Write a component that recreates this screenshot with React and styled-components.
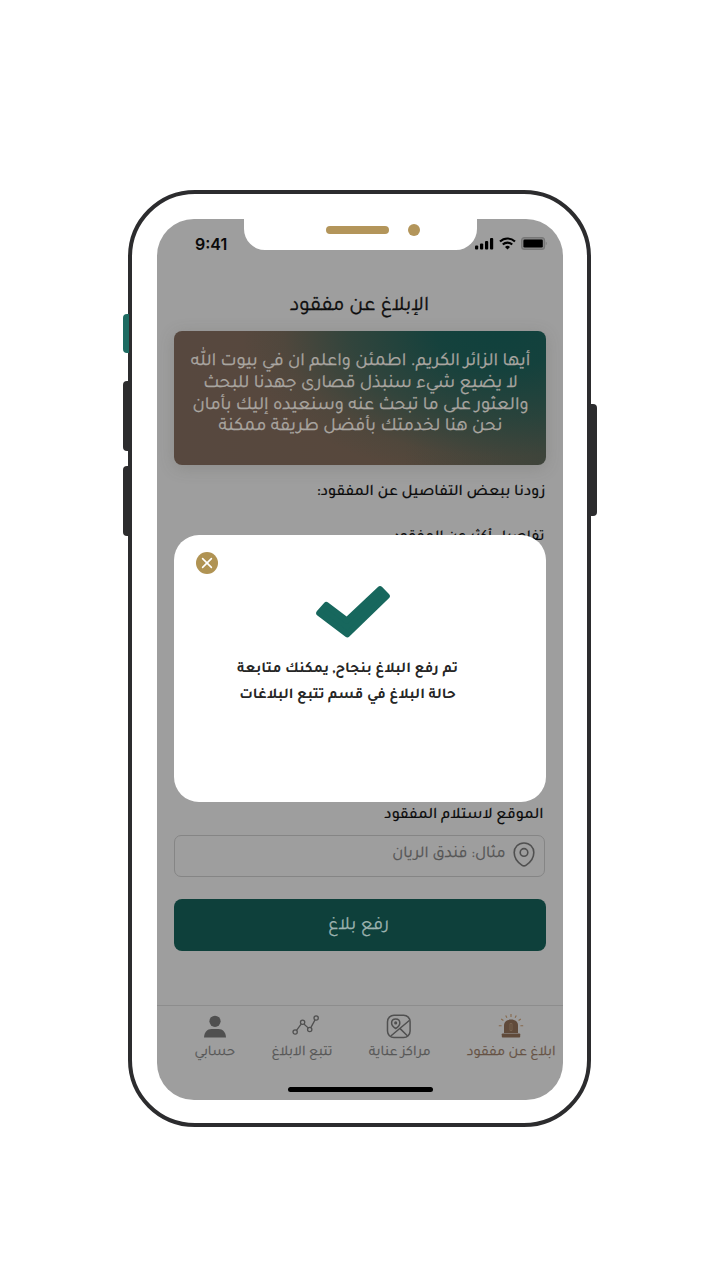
import React from "react";
import styled, { createGlobalStyle } from "styled-components";

const Global = createGlobalStyle`
  * { box-sizing: border-box; }
  body { margin: 0; background: #fff; font-family: Tajawal, "Noto Sans Arabic", "DejaVu Sans", sans-serif; }
`;

const Page = styled.main`
  display: flex;
  justify-content: center;
  height: 1280px;
  padding: 190px 1px 0 0;
  overflow: hidden;
`;

const Phone = styled.div`
  position: relative;
  width: 463px;
  height: 937px;
  padding: 24.5px 24px 0 24.5px;
  border: 4.5px solid #2c2c2e;
  border-radius: 67px;
  background: #fff;
`;

const SideButton = styled.i`
  position: absolute;
  ${(p) => (p.$side === "left" ? "left: -9.5px" : "right: -9.5px")};
  top: ${(p) => p.$top}px;
  width: 6px;
  height: ${(p) => p.$height}px;
  border-radius: ${(p) => (p.$side === "left" ? "4px 0 0 4px" : "0 4px 4px 0")};
  background: ${(p) => p.$color || "#2c2c2e"};
`;

const Screen = styled.div`
  position: relative;
  display: flex;
  flex-direction: column;
  width: 406px;
  height: 881.5px;
  border-radius: 37px;
  background: #9e9e9e;
  overflow: hidden;
`;

const Notch = styled.div`
  position: absolute;
  top: -1px;
  left: 87px;
  width: 233px;
  height: 32.5px;
  border-radius: 0 0 21px 21px;
  background: #fff;
`;

const Speaker = styled.i`
  position: absolute;
  top: 8px;
  left: 82px;
  width: 63px;
  height: 8px;
  border-radius: 4px;
  background: #b3955a;
`;

const Camera = styled.i`
  position: absolute;
  top: 6px;
  left: 164px;
  width: 12px;
  height: 12px;
  border-radius: 50%;
  background: #b3955a;
`;

const StatusBar = styled.header`
  display: flex;
  flex: none;
  align-items: center;
  justify-content: space-between;
  height: 50px;
  padding: 0 16px 0 38.5px;
`;

const Clock = styled.time`
  color: #0a0a0a;
  font: 600 16px Inter, sans-serif;
`;

const StatusIcons = styled.div`
  display: flex;
  align-items: center;
  gap: 5px;
`;

const Title = styled.h1`
  flex: none;
  height: 62.5px;
  margin: 0;
  padding-top: 7px;
  text-align: center;
  color: #0c0c0c;
  font-size: 20.6px;
  font-weight: 400;
  line-height: 62.5px;
  -webkit-text-stroke: 0.35px;
`;

const Banner = styled.section`
  flex: none;
  height: 134px;
  margin: 0 17px;
  padding: 20px 0 0 2px;
  border-radius: 8px;
  background:
    radial-gradient(ellipse 260px 150px at 88% 0%, #10413d 0%, rgba(16, 65, 61, 0.92) 25%, rgba(24, 66, 60, 0.6) 58%, rgba(50, 68, 58, 0.2) 84%, rgba(87, 72, 62, 0) 100%),
    linear-gradient(90deg, #57483f 0%, #57483c 62%, #46453b 90%, #40443b 100%);
  box-shadow: 0 3px 16px rgba(80, 80, 72, 0.22);
`;

const BannerLine = styled.p`
  margin: 0;
  height: 21.8px;
  text-align: center;
  white-space: nowrap;
  color: #aaa6a1;
  font-size: 18.4px;
  line-height: 23px;
  -webkit-text-stroke: 0.3px;
`;

const Label = styled.p`
  flex: none;
  height: 24px;
  margin: ${(p) => p.$top}px ${(p) => p.$right}px 0 0;
  color: #0c0c0c;
  font-size: ${(p) => p.$size || 15.9}px;
  font-weight: 500;
  line-height: 24px;
  -webkit-text-stroke: 0.15px;
`;

const Field = styled.div`
  display: flex;
  flex: none;
  justify-content: flex-start;
  gap: 7px;
  height: 42.5px;
  margin: 6.5px 18px 0 17px;
  padding: 6px 9px;
  border: 1.5px solid #858585;
  border-radius: 7px;
  color: #555;
  font-size: 16.4px;
  line-height: 25px;
  -webkit-text-stroke: 0.25px;
`;

const Submit = styled.button`
  flex: none;
  height: 52px;
  margin: 21.5px 17px 0;
  padding: 3px 2px 0 0;
  border: 0;
  border-radius: 8px;
  background: #0e403b;
  color: #9db3b0;
  font: 400 18.8px Tajawal, "Noto Sans Arabic", "DejaVu Sans", sans-serif;
  -webkit-text-stroke: 0.25px;
`;

const Nav = styled.nav`
  display: flex;
  flex: none;
  direction: ltr;
  gap: 36.3px;
  height: 95px;
  margin-top: auto;
  padding: 8px 0 0 38px;
  border-top: 1.5px solid #8d8d8d;
`;

const NavItem = styled.a`
  display: flex;
  flex-direction: column;
  align-items: center;
  gap: 4px;
  color: ${(p) => (p.$active ? "#665244" : "#575757")};
  font-size: 14.45px;
  line-height: 20px;
  white-space: nowrap;
  -webkit-text-stroke: 0.25px;
  svg { display: block; }
`;

const HomeBar = styled.i`
  position: absolute;
  bottom: 8px;
  left: 131px;
  width: 145px;
  height: 5.5px;
  border-radius: 3px;
  background: #000;
`;

const Modal = styled.div`
  position: absolute;
  top: 316px;
  left: 17px;
  display: flex;
  flex-direction: column;
  align-items: center;
  width: 372px;
  height: 267px;
  padding-top: 50px;
  border-radius: 25px;
  background: #fff;
`;

const Close = styled.button`
  position: absolute;
  top: 17px;
  left: 22.5px;
  width: 22px;
  height: 22px;
  padding: 0;
  border: 0;
  border-radius: 50%;
  background: #b09353;
  svg { display: block; }
`;

const Message = styled.p`
  margin: 18px 24px 0 0;
  text-align: center;
  white-space: nowrap;
  color: #262626;
  font-size: 15.18px;
  font-weight: 700;
  line-height: 26px;
`;

const Check = styled.svg`
  display: block;
  margin-right: 13px;
`;

const Signal = () => (
  <svg width="19" height="13" viewBox="0 0 19 13">
    <rect x="0" y="8.5" width="3.2" height="4" rx="1" />
    <rect x="5" y="6.5" width="3.2" height="6" rx="1" />
    <rect x="10" y="4" width="3.2" height="8.5" rx="1" />
    <rect x="15" y="1" width="3.2" height="11.5" rx="1" />
  </svg>
);

const Wifi = () => (
  <svg width="17" height="13" viewBox="0 0 17 13" fill="none" stroke="#000" strokeWidth="2.1">
    <path d="M1 4.600a10.600 10.600 0 0 1 15 0M3.800 7.600a6.600 6.600 0 0 1 9.400 0" />
    <path d="M8.500 12.600 6 10a3.600 3.600 0 0 1 5 0z" fill="#000" stroke="none" />
  </svg>
);

const Battery = () => (
  <svg width="26" height="13" viewBox="0 0 26 13">
    <rect x="0.6" y="0.6" width="23" height="11.8" rx="3" fill="#888" stroke="#777" strokeWidth="1.1" />
    <rect x="2.4" y="2.4" width="19.400" height="8.200" rx="1.4" />
    <path d="M24.800 4.600c1.100.700 1.100 3.100 0 3.800z" fill="#777" />
  </svg>
);

const Pin = () => (
  <svg width="22" height="25" viewBox="0 0 22 25" fill="none" stroke="#505050" strokeWidth="1.6">
    <path d="M11 1C5.300 1 1.200 5.200 1.200 10.500c0 5.200 3.300 9.700 7.600 12.600 1.500 1 2.900 1 4.400 0 4.300-2.900 7.600-7.400 7.600-12.600C20.800 5.200 16.700 1 11 1z" />
    <circle cx="11" cy="10.400" r="3.800" />
  </svg>
);

const Person = () => (
  <svg width="24" height="25" viewBox="0 0 24 25" fill="#505050">
    <circle cx="12" cy="7.300" r="5.600" />
    <path d="M1 23.500c.3-5.500 3.200-8.500 7.500-8.500h7c4.300 0 7.200 3 7.500 8.500z" />
  </svg>
);

const Chart = () => (
  <svg width="24" height="25" viewBox="0 0 28 25" fill="none" stroke="#505050" strokeWidth="1.500" overflow="visible">
    <g transform="translate(3 0)">
      <circle cx="3" cy="19" r="2.500" />
      <circle cx="11.700" cy="7.500" r="2.500" />
      <circle cx="20" cy="16" r="2.500" />
      <circle cx="27.500" cy="2.500" r="2.500" />
      <path d="M4.600 17 10.200 9.500M13.200 9.600l5 4.500M21.300 13.800l4.900-9" />
    </g>
  </svg>
);

const MapCard = () => (
  <svg width="25" height="25" viewBox="0 0 25 25" fill="none" stroke="#505050" strokeWidth="1.500" overflow="visible">
    <g transform="translate(-.7 0)">
      <rect x="1.200" y="1.200" width="22.600" height="22.400" rx="6.500" />
      <path d="M9.400 5C7 5 5.300 6.700 5.300 9c0 2 1.600 4 4.100 5.500 2.500-1.500 4.100-3.500 4.100-5.500 0-2.300-1.700-4-4.100-4z" />
      <circle cx="9.400" cy="8.900" r=".8" fill="#505050" />
      <path d="M4.500 22 23 6.500M13.800 14.600l7.500 7.400" />
    </g>
  </svg>
);

const Siren = () => (
  <svg width="26" height="25" viewBox="0 0 26 25" fill="#604a3a">
    <path d="M6 19v-7.600C6 7.800 8.800 5.600 13 5.600s7 2.200 7 5.800V19z" />
    <rect x="3.800" y="19.400" width="18.400" height="4.100" rx=".9" />
    <path d="M13 0v3M7.700 1.400l1.200 2.300M18.300 1.400l-1.200 2.300M3.200 5l2.200 1.500M22.800 5l-2.200 1.500M.8 11.800h2.800M22.400 11.800h2.800" stroke="#87694c" strokeWidth="1.100" />
    <path d="M12 9.500h2v7h-2z" fill="none" stroke="#806a58" strokeWidth=".7" />
  </svg>
);

const bannerLines = [
  "أيها الزائر الكريم. اطمئن واعلم ان في بيوت الله",
  "لا يضيع شيء سنبذل قصارى جهدنا للبحث",
  "والعثور على ما تبحث عنه وسنعيده إليك بأمان",
  "نحن هنا لخدمتك بأفضل طريقة ممكنة",
];

const tabs = [
  { text: "حسابي", Icon: Person },
  { text: "تتبع الابلاغ", Icon: Chart },
  { text: "مراكز عناية", Icon: MapCard },
  { text: "ابلاغ عن مفقود", Icon: Siren, active: true },
];

export default function App() {
  return (
    <Page>
      <Global />
      <Phone>
        <SideButton $side="left" $top={119.5} $height={39} $color="#1d6b62" />
        <SideButton $side="left" $top={187} $height={70} />
        <SideButton $side="left" $top={271.5} $height={70} />
        <SideButton $side="right" $top={210} $height={112} />
        <Screen dir="rtl">
          <StatusBar dir="ltr">
            <Clock>9:41</Clock>
            <StatusIcons>
              <Signal />
              <Wifi />
              <Battery />
            </StatusIcons>
          </StatusBar>
          <Title>الإبلاغ عن مفقود</Title>
          <Banner>
            {bannerLines.map((line) => (
              <BannerLine key={line}>{line}</BannerLine>
            ))}
          </Banner>
          <Label $top={16} $right={17}>زودنا ببعض التفاصيل عن المفقود:</Label>
          <Label $top={21} $right={18} $size={15.1}>تفاصيل أكثر عن المفقود</Label>
          <Label $top={254} $right={19}>الموقع لاستلام المفقود</Label>
          <Field>
            <Pin />
            مثال: فندق الريان
          </Field>
          <Submit>رفع بلاغ</Submit>
          <Nav>
            {tabs.map(({ text, Icon, active }) => (
              <NavItem key={text} $active={active}>
                <Icon />
                <span dir="rtl">{text}</span>
              </NavItem>
            ))}
          </Nav>
          <HomeBar />
          <Modal>
            <Close aria-label="إغلاق">
              <svg width="22" height="22" viewBox="0 0 22 22" stroke="#fff" strokeWidth="1.6" strokeLinecap="round">
                <path d="m6.600 6.600 8.800 8.800M15.400 6.600l-8.800 8.800" />
              </svg>
            </Close>
            <Check width="76" height="54" viewBox="0 0 76 54" fill="#17675d" stroke="#17675d" strokeWidth="6" strokeLinejoin="round">
              <path d="M4.200 28 11.300 20 31.800 35.500 65 4.200 71.800 11.200 32.300 49.300z" />
            </Check>
            <Message>
              تم رفع البلاغ بنجاح, يمكنك متابعة
              <br />
              حالة البلاغ في قسم تتبع البلاغات
            </Message>
          </Modal>
          <Notch dir="ltr">
            <Speaker />
            <Camera />
          </Notch>
        </Screen>
      </Phone>
    </Page>
  );
}
